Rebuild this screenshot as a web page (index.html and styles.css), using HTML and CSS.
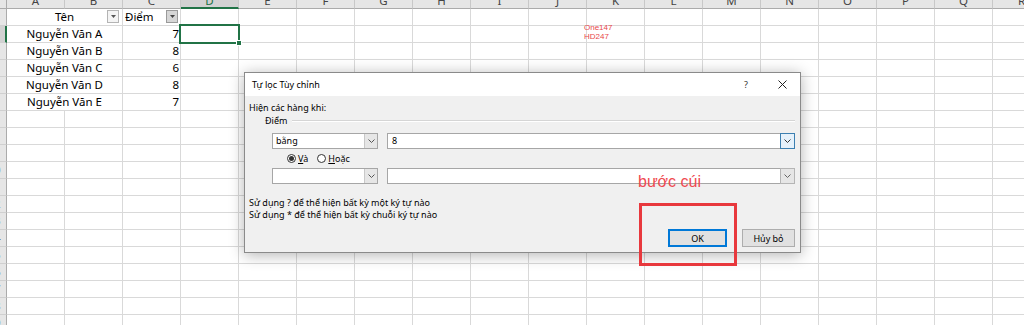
FILE: index.html
```html
<!DOCTYPE html>
<html lang="vi">
<head>
<meta charset="utf-8">
<title>Tự lọc Tùy chỉnh</title>
<link rel="stylesheet" href="styles.css">
</head>
<body>
<div class="app">
  <div class="sheet">
    <div class="colheads">
      <div class="corner"></div>
      <div class="ch">A</div><div class="ch">B</div><div class="ch">C</div><div class="ch sel">D</div>
      <div class="ch">E</div><div class="ch">F</div><div class="ch">G</div><div class="ch">H</div>
      <div class="ch">I</div><div class="ch">J</div><div class="ch">K</div><div class="ch">L</div>
      <div class="ch">M</div><div class="ch">N</div><div class="ch">O</div><div class="ch">P</div>
      <div class="ch">Q</div><div class="ch">R</div>
    </div>
    <div class="main">
      <div class="rowheads">
        <div class="rh">1</div><div class="rh sel">2</div><div class="rh">3</div><div class="rh">4</div>
        <div class="rh">5</div><div class="rh">6</div><div class="rh">7</div><div class="rh">8</div>
        <div class="rh">9</div><div class="rh">10</div><div class="rh">11</div><div class="rh">12</div>
        <div class="rh">13</div><div class="rh">14</div><div class="rh">15</div><div class="rh">16</div>
        <div class="rh">17</div><div class="rh">18</div><div class="rh">19</div>
      </div>
      <div class="cells">
        <div class="name r1">Tên<span class="fbtn"><svg width="5" height="3" viewBox="0 0 5 3"><path d="M0 0H5L2.5 3Z" fill="#555"/></svg></span></div>
        <div class="name r2">Nguyễn Văn A</div>
        <div class="name r3">Nguyễn Văn B</div>
        <div class="name r4">Nguyễn Văn C</div>
        <div class="name r5">Nguyễn Văn D</div>
        <div class="name r6">Nguyễn Văn E</div>
        <div class="head-c r1">Điểm<span class="fbtn on"><svg width="5" height="3" viewBox="0 0 5 3"><path d="M0 0H5L2.5 3Z" fill="#444"/></svg></span></div>
        <div class="num r2">7</div>
        <div class="num r3">8</div>
        <div class="num r4">6</div>
        <div class="num r5">8</div>
        <div class="num r6">7</div>
        <div class="selcell"><span class="handle"></span></div>
        <div class="note">One147<br>HD247</div>
      </div>
    </div>
  </div>

  <div class="dialog">
    <div class="titlebar">
      <span class="title">Tự lọc Tùy chỉnh</span>
      <span class="help">?</span>
      <svg class="close" width="9" height="9" viewBox="0 0 9 9"><path d="M0.5 0.5L8.5 8.5M8.5 0.5L0.5 8.5" stroke="#222" stroke-width="1" fill="none"/></svg>
    </div>
    <div class="dbody">
      <div class="lbl">Hiện các hàng khi:</div>
      <div class="group"><span>Điểm</span><span class="rule"></span></div>
      <div class="crow">
        <div class="combo c1"><span class="ctext">bằng</span><span class="drop"><svg width="7" height="4" viewBox="0 0 7 4"><path d="M0.5 0.5L3.5 3.5L6.5 0.5" fill="none" stroke="#555"/></svg></span></div>
        <div class="combo c2"><span class="ctext">8</span><span class="drop focus"><svg width="7" height="4" viewBox="0 0 7 4"><path d="M0.5 0.5L3.5 3.5L6.5 0.5" fill="none" stroke="#333"/></svg></span></div>
      </div>
      <div class="radios">
        <label class="radio"><span class="rb on"></span><span><u>V</u>à</span></label>
        <label class="radio"><span class="rb"></span><span><u>H</u>oặc</span></label>
      </div>
      <div class="crow crow2">
        <div class="combo c1"><span class="ctext"></span><span class="drop"><svg width="7" height="4" viewBox="0 0 7 4"><path d="M0.5 0.5L3.5 3.5L6.5 0.5" fill="none" stroke="#555"/></svg></span></div>
        <div class="combo c2"><span class="ctext"></span><span class="drop grey"><svg width="7" height="4" viewBox="0 0 7 4"><path d="M0.5 0.5L3.5 3.5L6.5 0.5" fill="none" stroke="#666"/></svg></span></div>
      </div>
      <div class="hint">Sử dụng ? để thể hiện bất kỳ một ký tự nào<br>Sử dụng * để thể hiện bất kỳ chuỗi ký tự nào</div>
      <div class="buttons">
        <button class="btn ok">OK</button>
        <button class="btn cancel">Hủy bỏ</button>
      </div>
    </div>
  </div>

  <div class="callout">bước cúi</div>
  <div class="redbox"></div>
</div>
</body>
</html>
```
FILE: styles.css
```css
* { box-sizing: border-box; margin: 0; padding: 0; }
html, body { width: 1024px; height: 325px; overflow: hidden; background: #fff; }
body { font-family: "Noto Sans", sans-serif; }

.app { position: relative; width: 1024px; height: 325px; overflow: hidden; }

/* ---------- spreadsheet ---------- */
.sheet { margin: -11px 0 0 -18px; width: 1069px; font-size: 11.5px; color: #000; }

.colheads { display: flex; height: 20px; }
.corner { flex: 0 0 25px; background: #e6e6e6; border-right: 1px solid #ababab; border-bottom: 1px solid #ababab; }
.ch {
  flex: 0 0 58px; background: #e6e6e6;
  border-right: 1px solid #c8c8c8; border-bottom: 1px solid #ababab;
  text-align: center; color: #444; padding-top: 3px; line-height: 17px;
}
.ch.sel { background: #d2d2d2; border-bottom: 2px solid #217346; color: #217346; }

.main { display: flex; }
.rowheads { display: flex; flex-direction: column; flex: 0 0 25px; }
.rh {
  height: 17px; background: #e6e6e6;
  border-right: 1px solid #ababab; border-bottom: 1px solid #d0d0d0;
  text-align: center; line-height: 16px; color: #444;
}
.rh.sel { background: #d2d2d2; border-right: 2px solid #217346; color: #217346; }

.cells {
  display: grid;
  grid-template-columns: repeat(18, 58px);
  grid-template-rows: repeat(19, 17px);
  background-color: #fff;
  background-image:
    linear-gradient(to right, transparent 57px, #d9d9d9 57px),
    linear-gradient(to bottom, transparent 16px, #d9d9d9 16px);
  background-size: 58px 100%, 100% 17px;
}
.r1 { grid-row: 1; }
.r2 { grid-row: 2; }
.r3 { grid-row: 3; }
.r4 { grid-row: 4; }
.r5 { grid-row: 5; }
.r6 { grid-row: 6; }

.name {
  grid-column: 1 / span 2; position: relative;
  background: #fff; border-right: 1px solid #d9d9d9; border-bottom: 1px solid #d9d9d9;
  text-align: center; line-height: 16px;
}
.head-c { grid-column: 3; position: relative; padding-left: 2px; line-height: 16px; }
.num { grid-column: 3; text-align: right; padding-right: 2px; line-height: 16px; }

.fbtn {
  position: absolute; right: 3px; top: 1px; width: 12px; height: 13px;
  border: 1px solid #b4b4b4; background: #f4f4f4;
  display: flex; align-items: center; justify-content: center;
}
.fbtn.on { background: #d6d6d6; border-color: #9a9a9a; }

.selcell {
  grid-column: 4; grid-row: 2; position: relative;
  margin: -2px -1px -1px -2px; border: 2px solid #217346;
}
.handle {
  position: absolute; right: -4px; bottom: -4px; width: 6px; height: 6px;
  background: #217346; border: 1px solid #fff;
}

.note {
  grid-column: 11 / span 2; grid-row: 2 / span 2;
  margin: -2px 0 0 -3px;
  font-family: "Liberation Sans", Arial, sans-serif; font-size: 8px; line-height: 8.5px;
  color: #e8474b;
}

/* ---------- dialog ---------- */
.dialog {
  position: absolute; left: 244px; top: 72px; width: 557px; height: 181px;
  border: 1px solid #8a8a8a; background: #f0f0f0;
  box-shadow: 0 2px 14px rgba(0, 0, 0, 0.3);
  display: flex; flex-direction: column;
  font-size: 9px; color: #000;
}
.titlebar {
  height: 23px; background: #fff; display: flex; align-items: center;
  padding: 0 13px 0 7px;
}
.title { flex: 1; }
.help { margin-right: 30px; color: #333; }
.close { display: block; }

.dbody { flex: 1; padding: 6px 5px 5px 4px; display: flex; flex-direction: column; }
.lbl { height: 12px; line-height: 12px; }
.group { display: flex; align-items: center; height: 12px; line-height: 12px; margin-top: 1px; padding-left: 16px; }
.rule { flex: 1; height: 2px; border-top: 1px solid #d5d5d5; border-bottom: 1px solid #fff; margin-left: 5px; }

.crow { display: flex; gap: 9px; height: 16px; margin-top: 6px; padding-left: 23px; }
.crow2 { margin-top: 2px; }
.combo { height: 16px; border: 1px solid #a6a6a6; background: #fff; display: flex; }
.c1 { width: 106px; }
.c2 { flex: 1; }
.ctext { flex: 1; padding-left: 3px; line-height: 14px; }
.c2 .ctext { padding-left: 4px; }
.drop {
  width: 13px; display: flex; align-items: center; justify-content: center;
  border-left: 1px solid #c8c8c8; background: #e6e6e6;
}
.drop.focus {
  width: 15px; margin: -1px -1px -1px 0;
  border: 1px solid #3c7fb1; background: #e5f1fb;
}
.drop.grey {
  width: 15px; margin: -1px -1px -1px 0;
  border: 1px solid #b5b5b5; background: #e6e6e6;
}

.radios { display: flex; align-items: center; gap: 9px; height: 16px; margin-top: 1px; padding-left: 38px; }
.radio { display: flex; align-items: center; gap: 2px; }
.rb {
  width: 9px; height: 9px; border: 1px solid #333; border-radius: 50%; background: #fff;
  display: flex; align-items: center; justify-content: center;
}
.rb.on::after { content: ""; width: 5px; height: 5px; border-radius: 50%; background: #333; }

.hint { margin-top: 13px; line-height: 12px; }

.buttons { margin-top: 8px; display: flex; justify-content: flex-end; gap: 15px; }
.btn {
  height: 18px; font: inherit; color: #000; background: #e1e1e1;
  border: 1px solid #adadad;
}
.ok { width: 59px; border-color: #0078d7; box-shadow: inset 0 0 0 1px #0078d7; }
.cancel { width: 53px; }

/* ---------- annotation ---------- */
.callout {
  position: absolute; left: 638px; top: 174px;
  font-family: "Liberation Sans", Arial, sans-serif; font-size: 16px; line-height: 16px;
  color: #ef4a50;
}
.redbox {
  position: absolute; left: 639px; top: 203px; width: 98px; height: 63px;
  border: 3px solid #e8383d;
}
```
